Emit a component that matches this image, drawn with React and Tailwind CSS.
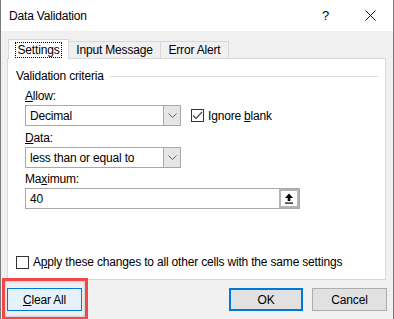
import React from 'react';

function Chevron() {
  return (
    <svg width="9" height="6" viewBox="0 0 9 6" className="text-[#606060]">
      <path d="M0.5 0.5 L4.5 4.5 L8.5 0.5" fill="none" stroke="currentColor" strokeWidth="1" />
    </svg>
  );
}

function Combo({ value }) {
  return (
    <div className="w-[156px] h-[21px] border border-[#a8a8a8] bg-white flex items-stretch">
      <div className="flex-1 flex items-center pl-[4px]">{value}</div>
      <div className="w-[17px] bg-[#e6e6e6] border-l border-[#a8a8a8] flex items-center justify-center">
        <Chevron />
      </div>
    </div>
  );
}

function Check({ checked }) {
  return (
    <div className="w-[13px] h-[13px] border border-[#333] bg-white flex items-center justify-center">
      {checked && (
        <svg width="11" height="9" viewBox="0 0 11 9">
          <path d="M1 4.5 L4 7.5 L10 1" fill="none" stroke="#444" strokeWidth="1.2" />
        </svg>
      )}
    </div>
  );
}

export default function App() {
  return (
    <div className="relative w-[394px] h-[319px] bg-[#f0f0f0] border-x border-[#7a7a7a] flex flex-col font-['Liberation_Sans',Arial,sans-serif] text-[12px] leading-[16px] tracking-[-0.18px] text-black overflow-hidden">
      {/* Title bar */}
      <div className="h-[31px] bg-white flex items-center pl-[8px] shrink-0">
        <span>Data Validation</span>
        <span className="ml-auto text-[13px] mr-[36px]">?</span>
        <svg width="11" height="11" viewBox="0 0 11 11" className="mr-[17px]">
          <path d="M0.5 0.5 L10.5 10.5 M10.5 0.5 L0.5 10.5" stroke="#111" strokeWidth="1" />
        </svg>
      </div>

      {/* Tabs */}
      <div className="relative z-10 mt-[8px] ml-[7px] h-[20px] flex items-end">
        <div className="w-[61px] h-[20px] bg-white border-x border-t border-[#d9d9d9] flex items-center justify-center">
          <span className="border border-dotted border-black px-[2px] leading-[14px]">Settings</span>
        </div>
        <div className="w-[92px] h-[17px] mb-[1px] border-t border-r border-[#d9d9d9] flex items-center justify-center">
          Input Message
        </div>
        <div className="w-[68px] h-[17px] mb-[1px] border-t border-r border-[#d9d9d9] flex items-center justify-center">
          Error Alert
        </div>
      </div>

      {/* Panel */}
      <div className="-mt-px ml-[6px] w-[379px] h-[222px] bg-white border border-[#d9d9d9] flex flex-col pl-[8px] pt-[9px] pb-[9px]">
        <div className="flex items-center pr-[7px]">
          <span>Validation criteria</span>
          <div className="flex-1 h-px bg-[#dcdcdc] ml-[6px]" />
        </div>

        <div className="ml-[9px] mt-[4px] flex flex-col">
          <span><u>A</u>llow:</span>
          <div className="mt-px flex items-center">
            <Combo value="Decimal" />
            <div className="ml-[10px]"><Check checked /></div>
            <span className="ml-[4px]">Ignore <u>b</u>lank</span>
          </div>

          <span className="mt-[4px]"><u>D</u>ata:</span>
          <div className="mt-px">
            <Combo value="less than or equal to" />
          </div>

          <span className="mt-[3px]">Ma<u>x</u>imum:</span>
          <div className="mt-px w-[275px] h-[21px] border border-[#a8a8a8] bg-white flex items-stretch">
            <div className="flex-1 flex items-center pl-[4px]">40</div>
            <div className="w-[20px] border-2 border-[#b4b4b4] bg-white flex items-center justify-center">
              <svg width="10" height="11" viewBox="0 0 10 11">
                <path d="M5 0.5 L9 5 L6.3 5 L6.3 8 L3.7 8 L3.7 5 L1 5 Z" fill="#000" />
                <rect x="1" y="9.5" width="8" height="1.2" fill="#000" />
              </svg>
            </div>
          </div>
        </div>

        <div className="mt-auto flex items-center">
          <Check />
          <span className="ml-[4px]">A<u>p</u>ply these changes to all other cells with the same settings</span>
        </div>
      </div>

      {/* Buttons */}
      <div className="mt-[8px] flex items-center pl-[6px] pr-[6px]">
        <button className="w-[75px] h-[23px] bg-[#e5f1fb] border border-[#0078d7] flex items-center justify-center">
          <span><u>C</u>lear All</span>
        </button>
        <button className="ml-auto w-[74px] h-[23px] bg-[#e1e1e1] border-2 border-[#0078d7] flex items-center justify-center">
          OK
        </button>
        <button className="ml-[9px] w-[75px] h-[23px] bg-[#e1e1e1] border border-[#adadad] flex items-center justify-center">
          Cancel
        </button>
      </div>

      {/* Red highlight annotation */}
      <div className="absolute left-[1px] top-[278px] w-[86px] h-[42px] border-[3px] border-[#f0474d] shadow-[inset_0_0_3px_rgba(0,0,0,0.25)]" />
    </div>
  );
}
